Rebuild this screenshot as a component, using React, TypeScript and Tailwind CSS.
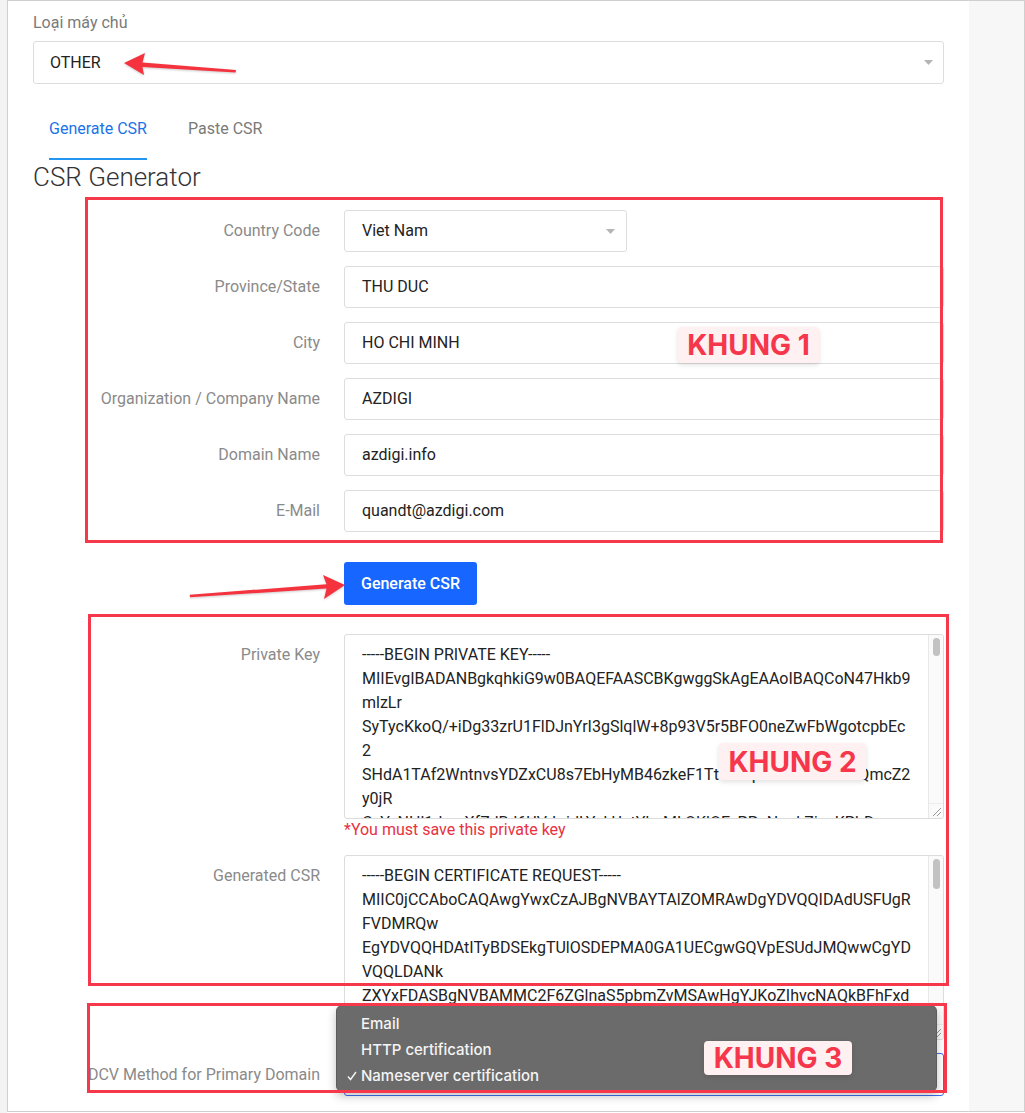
import React from "react";

const privateKeyLines = [
  "-----BEGIN PRIVATE KEY-----",
  "MIIEvgIBADANBgkqhkiG9w0BAQEFAASCBKgwggSkAgEAAoIBAQCoN47Hkb9",
  "mlzLr",
  "SyTycKkoQ/+iDg33zrU1FlDJnYrI3gSlqlW+8p93V5r5BFO0neZwFbWgotcpbEc",
  "2",
  "SHdA1TAf2WntnvsYDZxCU8s7EbHyMB46zkeF1Tt1ZbqHdcKAaAHhWQmcZ2",
  "y0jR",
  "CxYvNHl1dmsXfZdRJ6UVrLridLYcLUatYLpMLQKlOEvPPnNqqkZjqxKPbD",
  "4RkQZ2dYyJt2p+g0uPmxH3Fv",
];

const csrLines = [
  "-----BEGIN CERTIFICATE REQUEST-----",
  "MIIC0jCCAboCAQAwgYwxCzAJBgNVBAYTAlZOMRAwDgYDVQQIDAdUSFUgR",
  "FVDMRQw",
  "EgYDVQQHDAtITyBDSEkgTUlOSDEPMA0GA1UECgwGQVpESUdJMQwwCgYD",
  "VQQLDANk",
  "ZXYxFDASBgNVBAMMC2F6ZGlnaS5pbmZvMSAwHgYJKoZIhvcNAQkBFhFxd",
  "WFuZHRAYXpkaWdpLmNvbTCCASIwDQYJKoZIhvcNAQEBBQADggEPADCCAQoC",
];

const fields = [
  { label: "Province/State", value: "THU DUC" },
  { label: "City", value: "HO CHI MINH" },
  { label: "Organization / Company Name", value: "AZDIGI" },
  { label: "Domain Name", value: "azdigi.info" },
  { label: "E-Mail", value: "quandt@azdigi.com" },
];

function Caret() {
  return (
    <svg width="9" height="5" viewBox="0 0 9 5" className="shrink-0">
      <path d="M0 0h9L4.5 5z" fill="#b5b5b5" />
    </svg>
  );
}

function CodeBox({ lines, thumb }: { lines: string[]; thumb: string }) {
  return (
    <div className="flex h-[185px] w-[600px] overflow-hidden rounded-[3px] border border-[#dcdcdc]">
      <div className="flex-1 overflow-hidden pl-[17px] pt-[8px] text-[16px] leading-[24px] text-[#222]">
        {lines.map((l, i) => (
          <div key={i} className="whitespace-pre">
            {l}
          </div>
        ))}
      </div>
      <div className="flex w-[15px] shrink-0 flex-col border-l border-[#e8e8e8] bg-[#fafafa]">
        <div className="flex-1 px-[4px] pt-[3px]">
          <div className={`${thumb} w-[7px] rounded-full bg-[#c2c2c2]`} />
        </div>
        <div className="flex h-[15px] items-end justify-end border-t border-[#ececec] p-[2px]">
          <svg width="9" height="9" viewBox="0 0 9 9">
            <path d="M9 1L1 9M9 5L5 9" stroke="#9a9a9a" strokeWidth="1" />
          </svg>
        </div>
      </div>
    </div>
  );
}

function KhungTag({ text, className }: { text: string; className: string }) {
  return (
    <div
      className={`absolute flex items-center justify-center rounded-[4px] bg-[#fff0f1] font-['Inter',sans-serif] text-[28px] font-bold text-[#f5364b] shadow-[0_2px_5px_rgba(0,0,0,0.12)] ${className}`}
    >
      {text}
    </div>
  );
}

export default function App() {
  return (
    <div className="relative flex h-[1113px] w-[1025px] overflow-hidden bg-white font-['Roboto',sans-serif]">
      <div className="w-[7px] shrink-0 bg-[#f3f3f3]" />
      <div className="flex h-[1112px] flex-1 border border-[#cfcfcf]">
        {/* Main content */}
        <main className="w-[961px] shrink-0 overflow-hidden px-[25px] pt-[11px]">
          <div className="text-[16px] leading-[22px] text-[#7a7a7a]">Loại máy chủ</div>
          <div className="mt-[7px] flex h-[43px] items-center justify-between rounded-[3px] border border-[#dddddd] pl-[16px] pr-[10px] text-[16px] text-[#222]">
            <span>OTHER</span>
            <Caret />
          </div>

          {/* Tabs */}
          <div className="flex gap-[41px] pl-[16px] text-[16px] leading-[22px]">
            <div className="border-b-2 border-[#2196f3] pb-[18px] pt-[34px] text-[#1a73e8]">Generate CSR</div>
            <div className="border-b-2 border-transparent pb-[18px] pt-[34px] text-[#7a7a7a]">Paste CSR</div>
          </div>

          <h2 className="mt-[1px] text-[26px] font-light leading-[32px] text-[#333]">CSR Generator</h2>

          {/* Form */}
          <div className="mt-[17px] flex flex-col gap-[14px]">
            <div className="flex items-center gap-[24px]">
              <label className="w-[287px] shrink-0 text-right text-[16px] text-[#8a8a8a]">Country Code</label>
              <div className="flex h-[42px] w-[283px] items-center justify-between rounded-[3px] border border-[#dddddd] pl-[17px] pr-[11px] text-[16px] text-[#222]">
                <span>Viet Nam</span>
                <Caret />
              </div>
            </div>
            {fields.map((f) => (
              <div key={f.label} className="flex items-center gap-[24px]">
                <label className="w-[287px] shrink-0 text-right text-[16px] text-[#8a8a8a]">{f.label}</label>
                <div className="flex h-[42px] w-[600px] items-center rounded-[3px] border border-[#dddddd] pl-[17px] text-[16px] text-[#222]">
                  {f.value}
                </div>
              </div>
            ))}
          </div>

          <button className="ml-[311px] mt-[30px] flex h-[43px] w-[133px] items-center justify-center rounded-[3px] bg-[#1766ff] text-[16px] font-medium text-white">
            Generate CSR
          </button>

          {/* Private key */}
          <div className="mt-[29px] flex gap-[24px]">
            <label className="w-[287px] shrink-0 pt-[10px] text-right text-[16px] leading-[22px] text-[#8a8a8a]">Private Key</label>
            <div>
              <CodeBox lines={privateKeyLines} thumb="h-[18px]" />
              <p className="mt-[1px] text-[16px] leading-[20px] text-[#e8323f]">*You must save this private key</p>
            </div>
          </div>

          {/* Generated CSR */}
          <div className="mt-[15px] flex gap-[24px]">
            <label className="w-[287px] shrink-0 pt-[10px] text-right text-[16px] leading-[22px] text-[#8a8a8a]">Generated CSR</label>
            <CodeBox lines={csrLines} thumb="h-[30px]" />
          </div>

          {/* DCV */}
          <div className="mt-[13px] flex items-center gap-[24px]">
            <label className="w-[287px] shrink-0 whitespace-nowrap text-right text-[16px] text-[#8a8a8a]">DCV Method for Primary Domain</label>
            <div className="flex h-[43px] w-[600px] items-center rounded-[3px] border border-[#3b6df0] pl-[17px] text-[16px] text-[#222]">
              Nameserver certification
            </div>
          </div>
        </main>
        <div className="flex-1 bg-[#f7f7f7]" />
      </div>

      {/* Native select popup */}
      <div className="absolute left-[336px] top-[1005px] flex h-[87px] w-[601px] flex-col rounded-[6px] border border-[#5c5c5c] bg-[#6b6b6b] pt-[5px] font-['Inter',sans-serif] text-[15px] font-medium leading-[26px] text-[#f4f4f4] shadow-[0_4px_10px_rgba(0,0,0,0.25)]">
        <div className="pl-[24px]">Email</div>
        <div className="pl-[24px]">HTTP certification</div>
        <div className="flex items-center gap-[4px] pl-[10px]">
          <svg width="10" height="10" viewBox="0 0 10 10">
            <path d="M1 5.5l2.5 3L9 1" fill="none" stroke="#f4f4f4" strokeWidth="1.4" />
          </svg>
          <span>Nameserver certification</span>
        </div>
      </div>

      {/* Annotation frames */}
      <div className="absolute left-[85px] top-[197px] h-[346px] w-[858px] border-[3px] border-[#f5394b]" />
      <div className="absolute left-[88px] top-[614px] h-[372px] w-[861px] border-[3px] border-[#f5394b]" />
      <div className="absolute left-[87px] top-[1003px] h-[90px] w-[860px] border-[3px] border-[#f5394b]" />

      <KhungTag text="KHUNG 1" className="left-[678px] top-[327px] h-[36px] w-[141px]" />
      <KhungTag text="KHUNG 2" className="left-[719px] top-[743px] h-[37px] w-[147px]" />
      <KhungTag text="KHUNG 3" className="left-[704px] top-[1041px] h-[34px] w-[148px]" />

      {/* Arrows */}
      <svg className="absolute left-[120px] top-[50px]" width="120" height="30" viewBox="0 0 120 30">
        <path
          d="M4 13L25 3L22.5 12.6L116 20L115.6 22.4L22.5 17L24 25Z"
          fill="#f5333f"
          style={{ filter: "drop-shadow(0 1px 1px rgba(0,0,0,0.2))" }}
        />
      </svg>
      <svg className="absolute left-[185px] top-[573px]" width="165" height="30" viewBox="0 0 165 30">
        <path
          d="M160 12L139 26L141.5 15.5L5 24.2L4.8 21.8L141.5 11.2L138 2Z"
          fill="#f5333f"
          style={{ filter: "drop-shadow(0 1px 1px rgba(0,0,0,0.2))" }}
        />
      </svg>
    </div>
  );
}
